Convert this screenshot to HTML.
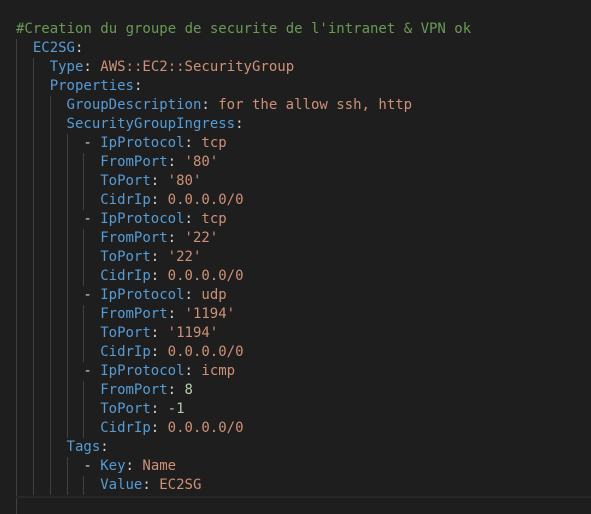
<!DOCTYPE html>
<html><head><style>
html,body{margin:0;padding:0;background:#1e1e1e;width:591px;height:502px;overflow:hidden}
.c{position:absolute;top:20px;left:16px;font-family:"DejaVu Sans Mono","Liberation Mono",monospace;font-size:14px;color:#d4d4d4}
.l{height:19px;line-height:19px;white-space:pre}
.g{display:inline-block;width:2ch;height:19px;vertical-align:top;box-shadow:inset 1px 0 #404040}
.k{color:#569cd6}.s{color:#ce9178}.n{color:#b5cea8}.m{color:#6a9955}
.cur{position:absolute;left:16px;right:0;top:496px;height:2px;background:#282828}
</style></head><body>
<div class="c">
<div class="l"><span class="m">#Creation du groupe de securite de l'intranet &amp; VPN ok</span></div>
<div class="l"><span class="g"></span><span class="k">EC2SG</span>:</div>
<div class="l"><span class="g"></span><span class="g"></span><span class="k">Type</span>: <span class="s">AWS::EC2::SecurityGroup</span></div>
<div class="l"><span class="g"></span><span class="g"></span><span class="k">Properties</span>:</div>
<div class="l"><span class="g"></span><span class="g"></span><span class="g"></span><span class="k">GroupDescription</span>: <span class="s">for the allow ssh, http</span></div>
<div class="l"><span class="g"></span><span class="g"></span><span class="g"></span><span class="k">SecurityGroupIngress</span>:</div>
<div class="l"><span class="g"></span><span class="g"></span><span class="g"></span><span class="g"></span>- <span class="k">IpProtocol</span>: <span class="s">tcp</span></div>
<div class="l"><span class="g"></span><span class="g"></span><span class="g"></span><span class="g"></span><span class="g"></span><span class="k">FromPort</span>: <span class="s">'80'</span></div>
<div class="l"><span class="g"></span><span class="g"></span><span class="g"></span><span class="g"></span><span class="g"></span><span class="k">ToPort</span>: <span class="s">'80'</span></div>
<div class="l"><span class="g"></span><span class="g"></span><span class="g"></span><span class="g"></span><span class="g"></span><span class="k">CidrIp</span>: <span class="s">0.0.0.0/0</span></div>
<div class="l"><span class="g"></span><span class="g"></span><span class="g"></span><span class="g"></span>- <span class="k">IpProtocol</span>: <span class="s">tcp</span></div>
<div class="l"><span class="g"></span><span class="g"></span><span class="g"></span><span class="g"></span><span class="g"></span><span class="k">FromPort</span>: <span class="s">'22'</span></div>
<div class="l"><span class="g"></span><span class="g"></span><span class="g"></span><span class="g"></span><span class="g"></span><span class="k">ToPort</span>: <span class="s">'22'</span></div>
<div class="l"><span class="g"></span><span class="g"></span><span class="g"></span><span class="g"></span><span class="g"></span><span class="k">CidrIp</span>: <span class="s">0.0.0.0/0</span></div>
<div class="l"><span class="g"></span><span class="g"></span><span class="g"></span><span class="g"></span>- <span class="k">IpProtocol</span>: <span class="s">udp</span></div>
<div class="l"><span class="g"></span><span class="g"></span><span class="g"></span><span class="g"></span><span class="g"></span><span class="k">FromPort</span>: <span class="s">'1194'</span></div>
<div class="l"><span class="g"></span><span class="g"></span><span class="g"></span><span class="g"></span><span class="g"></span><span class="k">ToPort</span>: <span class="s">'1194'</span></div>
<div class="l"><span class="g"></span><span class="g"></span><span class="g"></span><span class="g"></span><span class="g"></span><span class="k">CidrIp</span>: <span class="s">0.0.0.0/0</span></div>
<div class="l"><span class="g"></span><span class="g"></span><span class="g"></span><span class="g"></span>- <span class="k">IpProtocol</span>: <span class="s">icmp</span></div>
<div class="l"><span class="g"></span><span class="g"></span><span class="g"></span><span class="g"></span><span class="g"></span><span class="k">FromPort</span>: <span class="n">8</span></div>
<div class="l"><span class="g"></span><span class="g"></span><span class="g"></span><span class="g"></span><span class="g"></span><span class="k">ToPort</span>: <span class="n">-1</span></div>
<div class="l"><span class="g"></span><span class="g"></span><span class="g"></span><span class="g"></span><span class="g"></span><span class="k">CidrIp</span>: <span class="s">0.0.0.0/0</span></div>
<div class="l"><span class="g"></span><span class="g"></span><span class="g"></span><span class="k">Tags</span>:</div>
<div class="l"><span class="g"></span><span class="g"></span><span class="g"></span><span class="g"></span>- <span class="k">Key</span>: <span class="s">Name</span></div>
<div class="l"><span class="g"></span><span class="g"></span><span class="g"></span><span class="g"></span><span class="g"></span><span class="k">Value</span>: <span class="s">EC2SG</span></div>
<div class="l"><span class="g"></span></div>
</div>
<div class="cur"></div>
</body></html>
